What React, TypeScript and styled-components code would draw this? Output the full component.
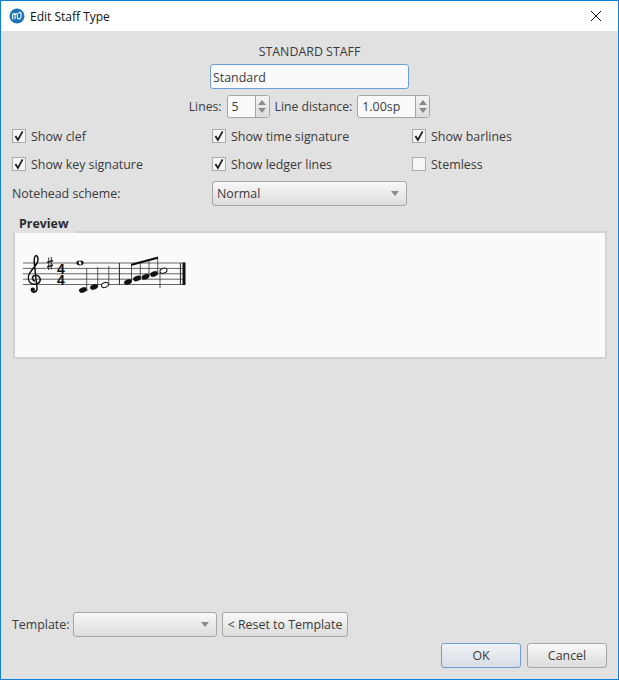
import styled, { createGlobalStyle } from 'styled-components'

const GlobalStyle = createGlobalStyle`
  html, body {
    margin: 0;
    padding: 0;
    background: #e1e1e1;
  }
  * {
    box-sizing: border-box;
  }
`

const CHECKS = [
  { label: 'Show clef', checked: true },
  { label: 'Show time signature', checked: true },
  { label: 'Show barlines', checked: true },
  { label: 'Show key signature', checked: true },
  { label: 'Show ledger lines', checked: true },
  { label: 'Stemless', checked: false },
]

const Logo = () => (
  <svg width="16" height="16" viewBox="0 0 16 16">
    <circle cx="8" cy="8" r="7.5" fill="#1b75b8" />
    <path d="M3.6 11.2V6.8C3.6 5.2 6 5.2 6 6.8V11.2M6 6.8C6 5.2 8.4 5.2 8.4 6.8V9.2C8.4 11.6 12 11.4 12 8.6V5.6C12 3.6 9.6 3.8 9.6 5.8" fill="none" stroke="#fff" strokeWidth="1.1" />
  </svg>
)

const CloseIcon = () => (
  <svg width="12" height="12" viewBox="0 0 12 12">
    <path d="M1 1L11 11M11 1L1 11" stroke="#111" strokeWidth="1" fill="none" />
  </svg>
)

const Check = () => (
  <svg width="12" height="12" viewBox="0 0 12 12">
    <path d="M2.4 6L4.9 10L9.6 1.4" stroke="#222" strokeWidth="1.8" fill="none" />
  </svg>
)

const Arrow = ({ up }: { up: boolean }) => (
  <svg width="8" height="5" viewBox="0 0 8 5">
    <path d={up ? 'M0 5L4 0L8 5Z' : 'M0 0L8 0L4 5Z'} fill="#8a8a8a" />
  </svg>
)

const Note = ({ x, y, open }: { x: number; y: number; open?: boolean }) => (
  <ellipse
    cx={x}
    cy={y}
    rx={open ? 3.6 : 3.9}
    ry="2.4"
    transform={`rotate(-20 ${x} ${y})`}
    fill={open ? '#fafafa' : '#111'}
    stroke="#111"
    strokeWidth={open ? 1 : 0.4}
  />
)

const Score = () => (
  <ScoreSvg width="170" height="46" viewBox="22 250 170 46">
    <g stroke="#555" strokeWidth="0.9">
      <line x1="23" y1="263" x2="185" y2="263" />
      <line x1="23" y1="268.4" x2="185" y2="268.4" />
      <line x1="23" y1="273.8" x2="185" y2="273.8" />
      <line x1="23" y1="279.2" x2="185" y2="279.2" />
      <line x1="23" y1="284.5" x2="185" y2="284.5" />
    </g>
    <path
      d="M35 281C32 280.5 31.5 276.5 34.5 275.5C38.5 274.5 41 278 40 281C38.8 284.5 33 285.5 30 282.5C27 279 28.5 274 31.5 270.5C35 266.5 38.5 263 38 258.5C37.7 256 36 254.5 35 256.5C34 258.5 34 262 34.6 266L37 288C37.5 291.5 33.5 293.5 31.5 291"
      fill="none"
      stroke="#111"
      strokeWidth="1.5"
    />
    <circle cx="32.8" cy="289.6" r="2.2" fill="#111" />
    <g stroke="#222" fill="none">
      <path d="M48.7 257.5V270M51.3 257V269.5" strokeWidth="0.9" />
      <path d="M47 262.5L53 260.5M47 267L53 265" strokeWidth="1.8" />
    </g>
    <text textAnchor="middle" fontFamily="'Liberation Sans', sans-serif" fontSize="14" fontWeight="700" fill="#111">
      <tspan x="61" y="273.8">4</tspan>
      <tspan x="61" y="284.8">4</tspan>
    </text>
    <g stroke="#333" strokeWidth="0.8">
      <line x1="79" y1="290" x2="88" y2="290" />
      <line x1="86.7" y1="289" x2="86.7" y2="268" />
      <line x1="97.7" y1="287" x2="97.7" y2="267" />
      <line x1="108.8" y1="285" x2="108.8" y2="266" />
      <line x1="131.5" y1="282" x2="131.5" y2="264" />
      <line x1="140.3" y1="278" x2="140.3" y2="262" />
      <line x1="149" y1="276" x2="149" y2="260" />
      <line x1="157.7" y1="274" x2="157.7" y2="258" />
      <line x1="160" y1="272" x2="160" y2="288" />
    </g>
    <ellipse cx="80" cy="263" rx="3.6" ry="2.4" fill="#111" />
    <ellipse cx="80" cy="263" rx="1.2" ry="1.9" fill="#fafafa" transform="rotate(-25 80 263)" />
    <Note x={83} y={290} />
    <Note x={94} y={287} />
    <Note x={105} y={285} open />
    <line x1="119.4" y1="263" x2="119.4" y2="284.5" stroke="#222" strokeWidth="1" />
    <Note x={128} y={282} />
    <Note x={137} y={278.5} />
    <Note x={145.5} y={276.8} />
    <Note x={154} y={274} />
    <path d="M131 263.8L158 256.5V258.8L131 266Z" fill="#111" />
    <Note x={163.5} y={270.8} open />
    <line x1="180.4" y1="263" x2="180.4" y2="284.5" stroke="#222" strokeWidth="1" />
    <rect x="182.5" y="262.6" width="3" height="22.4" fill="#111" />
  </ScoreSvg>
)

const App = () => {
  return (
    <Window>
      <GlobalStyle />
      <TitleBar>
        <Logo />
        <Title>Edit Staff Type</Title>
        <CloseButton>
          <CloseIcon />
        </CloseButton>
      </TitleBar>
      <Body>
        <Heading>STANDARD STAFF</Heading>
        <NameInput>Standard</NameInput>
        <SpinRow>
          <SpinLabel>Lines:</SpinLabel>
          <SpinBox width={43}>
            <SpinValue>5</SpinValue>
            <SpinButtons>
              <Arrow up />
              <Arrow up={false} />
            </SpinButtons>
          </SpinBox>
          <SpinLabel>Line distance:</SpinLabel>
          <SpinBox width={73}>
            <SpinValue>1.00sp</SpinValue>
            <SpinButtons>
              <Arrow up />
              <Arrow up={false} />
            </SpinButtons>
          </SpinBox>
        </SpinRow>
        <CheckGrid>
          {CHECKS.map(c => (
            <CheckRow key={c.label}>
              <CheckBox>{c.checked && <Check />}</CheckBox>
              <Label>{c.label}</Label>
            </CheckRow>
          ))}
        </CheckGrid>
        <SchemeRow>
          <SchemeLabel>Notehead scheme:</SchemeLabel>
          <Combo width={195}>
            <span>Normal</span>
            <Arrow up={false} />
          </Combo>
        </SchemeRow>
        <GroupTitle>Preview</GroupTitle>
        <PreviewFrame>
          <Score />
        </PreviewFrame>
        <Spacer />
        <TemplateRow>
          <TemplateLabel>Template:</TemplateLabel>
          <Combo width={144}>
            <span />
            <Arrow up={false} />
          </Combo>
          <PushButton width={126}>&lt; Reset to Template</PushButton>
        </TemplateRow>
        <DialogButtons>
          <PushButton width={80} primary>OK</PushButton>
          <PushButton width={80}>Cancel</PushButton>
        </DialogButtons>
      </Body>
    </Window>
  )
}

const Window = styled.div`
  width: 619px;
  height: 680px;
  display: flex;
  flex-direction: column;
  border: 1px solid #0f80d8;
  background: #e1e1e1;
  font-family: 'Open Sans', 'Noto Sans', sans-serif;
  font-size: 12.4px;
  color: #3a3a3a;
  overflow: hidden;
`

const TitleBar = styled.div`
  height: 30px;
  flex: none;
  display: flex;
  align-items: center;
  padding-left: 8px;
  background: #fff;
`

const Title = styled.div`
  flex: 1;
  margin-left: 5px;
  font-size: 12px;
  color: #111;
`

const CloseButton = styled.div`
  width: 45px;
  height: 30px;
  display: flex;
  align-items: center;
  justify-content: center;
`

const Body = styled.div`
  flex: 1;
  display: flex;
  flex-direction: column;
  padding: 12px 11px 11px 11px;
`

const Heading = styled.div`
  height: 17px;
  line-height: 17px;
  text-align: center;
`

const NameInput = styled.div`
  width: 199px;
  height: 25px;
  margin: 4px auto 0;
  padding-left: 2px;
  line-height: 25px;
  background: #fafafa;
  border: 1px solid #6e9fd4;
  border-radius: 3px;
`

const SpinRow = styled.div`
  display: flex;
  align-items: center;
  justify-content: center;
  gap: 5px;
  margin-top: 6px;
`

const Label = styled.span`
  white-space: nowrap;
`

const SpinLabel = styled(Label)`
  font-size: 12.2px;
`

const TemplateLabel = styled.span`
  width: 56px;
  white-space: nowrap;
`

const SpinBox = styled.div<{ width: number }>`
  width: ${props => props.width}px;
  height: 23px;
  display: flex;
  background: #fafafa;
  border: 1px solid #a6a6a6;
  border-radius: 3px;
`

const SpinValue = styled.div`
  flex: 1;
  padding-left: 4px;
  line-height: 21px;
`

const SpinButtons = styled.div`
  width: 14px;
  display: flex;
  flex-direction: column;
  align-items: center;
  justify-content: center;
  gap: 3px;
  background: linear-gradient(#f4f4f4, #dcdcdc);
  border-left: 1px solid #a6a6a6;
  border-radius: 0 2px 2px 0;
`

const CheckGrid = styled.div`
  display: grid;
  grid-template-columns: repeat(3, 200px);
  grid-auto-rows: 28px;
  margin-top: 4px;
`

const CheckRow = styled.div`
  display: flex;
  align-items: center;
  gap: 5px;
`

const CheckBox = styled.div`
  width: 14px;
  height: 14px;
  margin-top: -1px;
  display: flex;
  align-items: center;
  justify-content: center;
  background: #f6f6f6;
  border: 1px solid #ababab;
`

const SchemeRow = styled.div`
  display: flex;
  align-items: center;
  margin-top: 3px;
`

const SchemeLabel = styled.span`
  width: 200px;
`

const Combo = styled.div<{ width: number }>`
  width: ${props => props.width}px;
  height: 25px;
  display: flex;
  align-items: center;
  justify-content: space-between;
  padding: 0 7px 0 4px;
  background: linear-gradient(#f8f8f8, #dcdcdc);
  border: 1px solid #a6a6a6;
  border-radius: 3px;
`

const GroupTitle = styled.div`
  position: relative;
  width: 62px;
  height: 18px;
  margin: 9px 0 -2px 1px;
  padding-left: 6px;
  line-height: 18px;
  font-weight: 700;
  color: #2b2b2b;
  background: #e1e1e1;
`

const PreviewFrame = styled.div`
  width: 594px;
  height: 128px;
  margin-left: 1px;
  padding: 17px 0 0 7px;
  background: #fafafa;
  border: 2px solid #d2d2d2;
  border-radius: 1px;
`

const ScoreSvg = styled.svg`
  display: block;
`

const Spacer = styled.div`
  flex: 1;
`

const TemplateRow = styled.div`
  display: flex;
  align-items: center;
  gap: 5px;
`

const PushButton = styled.div<{ width: number; primary?: boolean }>`
  width: ${props => props.width}px;
  height: 25px;
  line-height: 24px;
  text-align: center;
  white-space: nowrap;
  background: ${props => props.primary
    ? 'linear-gradient(#f0f3f7, #d8dde3)'
    : 'linear-gradient(#f8f8f8, #dcdcdc)'};
  border: 1px solid ${props => props.primary ? '#6e9fd4' : '#a6a6a6'};
  border-radius: 3px;
`

const DialogButtons = styled.div`
  display: flex;
  justify-content: flex-end;
  gap: 6px;
  margin-top: 6px;
`

export default App
